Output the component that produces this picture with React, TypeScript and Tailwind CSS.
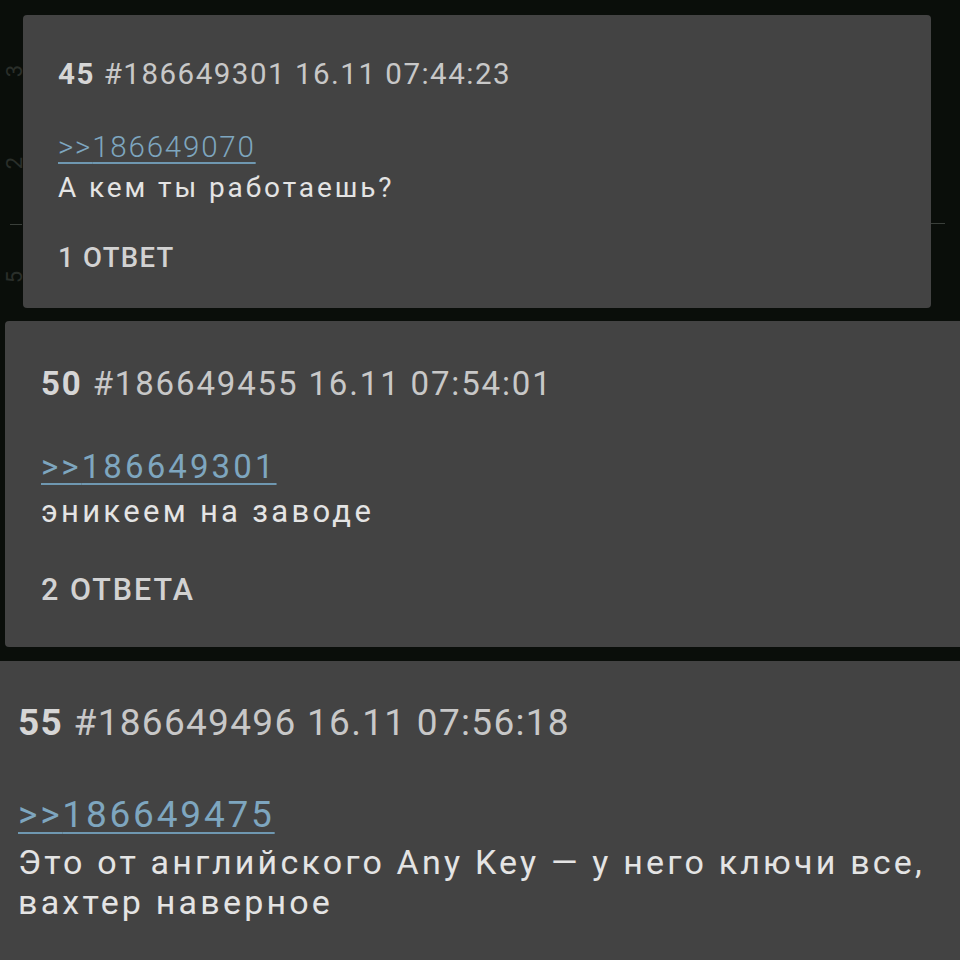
import React from "react";

type CardProps = {
  num: string;
  rest: string;
  link: string;
  lines: string[];
  label?: string;
  cls: {
    card: string;
    header: string;
    link: string;
    body: string;
    label: string;
  };
};

function Card({ num, rest, link, lines, label, cls }: CardProps) {
  return (
    <div className={cls.card}>
      <div className={cls.header}>
        <span className="font-bold text-[#d6d6d6]">{num}</span>
        <span> {rest}</span>
      </div>
      <div className={cls.link}>
        <span className="underline decoration-[#6f98b1] decoration-[1.5px] underline-offset-[5px]">
          &gt;&gt;{link}
        </span>
      </div>
      <div className={cls.body}>
        {lines.map((l, i) => (
          <div key={i}>{l}</div>
        ))}
      </div>
      {label && <div className={cls.label}>{label}</div>}
    </div>
  );
}

export default function App() {
  return (
    <div className="relative w-[960px] h-[960px] overflow-hidden bg-[#0a0e0a] font-['Roboto',sans-serif]">
      {/* faint back layer */}
      <div className="absolute left-0 top-0 w-[960px] h-[320px]">
        <div className="absolute left-[9px] top-[60px] -rotate-90 text-[22px] leading-[22px] text-[#2a2f2a]">3</div>
        <div className="absolute left-[9px] top-[152px] -rotate-90 text-[22px] leading-[22px] text-[#2a2f2a]">2</div>
        <div className="absolute left-[9px] top-[266px] -rotate-90 text-[22px] leading-[22px] text-[#2a2f2a]">5</div>
        <div className="absolute left-[10px] top-[224px] w-[12px] h-[1px] bg-[#3a3f3a]" />
        <div className="absolute left-[931px] top-[223px] w-[14px] h-[1px] bg-[#3a3f3a]" />
      </div>

      <div className="relative flex flex-col pt-[15px]">
        <Card
          num="45"
          rest="#186649301 16.11 07:44:23"
          link="186649070"
          lines={["А кем ты работаешь?"]}
          label="1 ОТВЕТ"
          cls={{
            card: "ml-[23px] w-[908px] flex flex-col rounded-[4px] bg-[#434343] pl-[35px] pt-[42px] pb-[34px]",
            header: "text-[29.5px] leading-[34px] tracking-[1.5px] text-[#c8c8c8]",
            link: "mt-[39px] text-[29.5px] leading-[34px] tracking-[1.8px] text-[#7ea6bf] font-light",
            body: "mt-[7px] text-[28px] leading-[33px] tracking-[2.9px] text-[#e4e4e4]",
            label: "mt-[37px] text-[27.5px] leading-[33px] font-medium text-[#d2d2d2] tracking-[1.3px]",
          }}
        />
        <Card
          num="50"
          rest="#186649455 16.11 07:54:01"
          link="186649301"
          lines={["эникеем на заводе"]}
          label="2 ОТВЕТА"
          cls={{
            card: "mt-[13px] ml-[5px] w-[980px] shrink-0 flex flex-col rounded-[4px] bg-[#434343] pl-[36px] pt-[44px] pb-[39px]",
            header: "text-[33px] leading-[38px] tracking-[1.85px] text-[#c8c8c8]",
            link: "mt-[45px] text-[33px] leading-[38px] tracking-[3.1px] text-[#7ea6bf]",
            body: "mt-[8px] text-[31px] leading-[36px] tracking-[3.3px] text-[#e4e4e4]",
            label: "mt-[42px] text-[30.5px] leading-[36px] font-medium text-[#d2d2d2] tracking-[2px]",
          }}
        />
        <Card
          num="55"
          rest="#186649496 16.11 07:56:18"
          link="186649475"
          lines={["Это от английского Any Key — у него ключи все,", "вахтер наверное"]}
          cls={{
            card: "mt-[14px] w-[960px] flex flex-col bg-[#434343] pl-[18px] pt-[41px] pb-[40px]",
            header: "text-[37px] leading-[42px] tracking-[1.3px] text-[#c8c8c8]",
            link: "mt-[50px] text-[37px] leading-[42px] tracking-[2.8px] text-[#7ea6bf]",
            body: "mt-[6px] text-[34px] leading-[40px] tracking-[3.2px] text-[#e4e4e4] whitespace-nowrap",
            label: "",
          }}
        />
      </div>
    </div>
  );
}
